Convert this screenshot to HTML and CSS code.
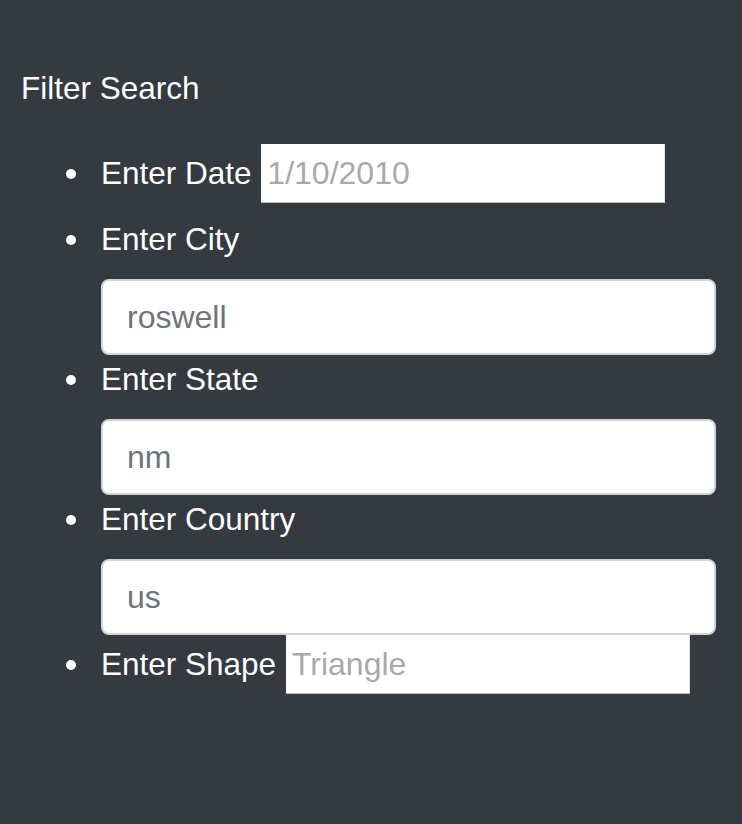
FILE: index.html
```html
<!DOCTYPE html>
<html lang="en">
<head>
<meta charset="utf-8">
<title>Filter Search</title>
<link rel="stylesheet" href="styles.css">
</head>
<body>
<aside class="sidebar">
  <form class="filter-form">
    <p class="filter-title">Filter Search</p>
    <ul class="filter-list">
      <li class="filter-item filter-item--inline">
        <label class="filter-label" for="datetime">Enter Date</label>
        <input class="plain-input plain-input--first" id="datetime" type="text" placeholder="1/10/2010">
      </li>
      <li class="filter-item filter-item--stacked">
        <label class="filter-label" for="city">Enter City</label>
        <input class="form-input" id="city" type="text" value="roswell">
      </li>
      <li class="filter-item filter-item--stacked">
        <label class="filter-label" for="state">Enter State</label>
        <input class="form-input" id="state" type="text" value="nm">
      </li>
      <li class="filter-item filter-item--stacked">
        <label class="filter-label" for="country">Enter Country</label>
        <input class="form-input" id="country" type="text" value="us">
      </li>
      <li class="filter-item filter-item--inline">
        <label class="filter-label" for="shape">Enter Shape</label>
        <input class="plain-input" id="shape" type="text" placeholder="Triangle">
      </li>
    </ul>
  </form>
</aside>
</body>
</html>
```
FILE: styles.css
```css
html, body {
  margin: 0;
  padding: 0;
  background: #343a40;
  min-height: 100%;
}

body {
  font-family: "Liberation Sans", Arial, Helvetica, sans-serif;
  color: #ffffff;
  font-size: 31.5px;
  line-height: 48px;
}

.sidebar {
  padding: 64px 26px 0 21px;
}

.filter-form {
  margin: 0;
}

.filter-title {
  margin: 0;
}

.filter-list {
  margin: 32px 0 0 0;
  padding-left: 80px;
  list-style: none;
}

.filter-label::before {
  content: "";
  display: inline-block;
  width: 10px;
  height: 10px;
  border-radius: 50%;
  background: #ffffff;
  margin-left: -35px;
  margin-right: 25px;
  vertical-align: 5px;
}

.filter-item--stacked .filter-label {
  display: block;
  margin-bottom: 16px;
}

.plain-input {
  box-sizing: border-box;
  width: 404px;
  height: 59px;
  padding: 0 6px;
  margin: 0 0 0 1px;
  font-family: "Liberation Sans", Arial, Helvetica, sans-serif;
  font-size: 32px;
  color: #a9a9a9;
  background: #ffffff;
  border: 0;
  border-right: 1px solid #e2e2e2;
  border-bottom: 1px solid #bdbdbd;
  vertical-align: baseline;
  outline: none;
}

.plain-input--first {
  margin-bottom: 12px;
}

.plain-input::placeholder {
  color: #a9a9a9;
  opacity: 1;
}

.form-input {
  display: block;
  box-sizing: border-box;
  width: 100%;
  height: 76px;
  padding: 0 24px;
  margin: 0;
  font-family: "Liberation Sans", Arial, Helvetica, sans-serif;
  font-size: 32px;
  color: #6c757d;
  background: #ffffff;
  border: 2px solid #ced4da;
  border-radius: 8px;
  outline: none;
}
```
